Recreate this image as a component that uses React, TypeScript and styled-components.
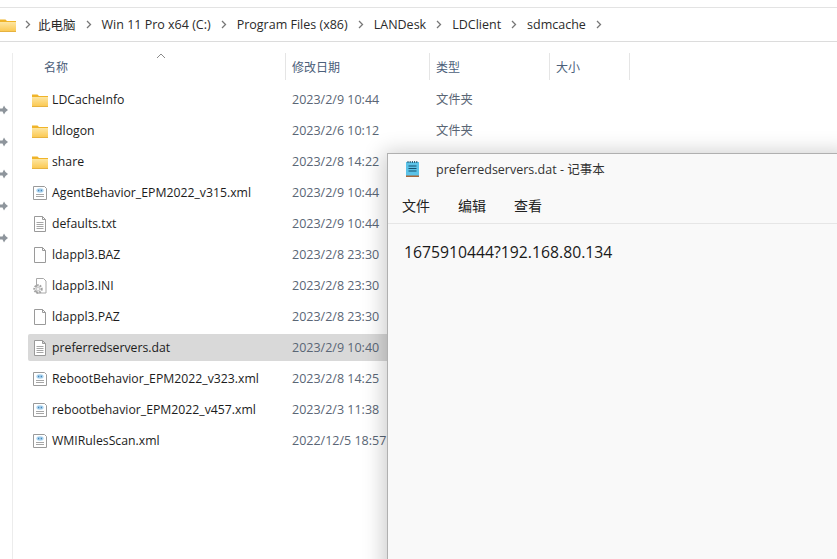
import { FC } from "react";
import styled, { createGlobalStyle } from "styled-components";

const GlobalStyle = createGlobalStyle`
  html, body {
    margin: 0;
    padding: 0;
    background: #fff;
    overflow: hidden;
  }
  * {
    box-sizing: border-box;
  }
`;

const FONT = `"Open Sans", "Noto Sans CJK SC", sans-serif`;

const Page = styled.div`
  position: relative;
  width: 837px;
  height: 559px;
  overflow: hidden;
  background: #fff;
  font-family: ${FONT};
  font-size: 12.25px;
  color: #1c1c1c;
`;

const AddressBar = styled.div`
  display: flex;
  align-items: center;
  height: 35px;
  margin-top: 7px;
  border-top: 1px solid #e3e3e3;
  border-bottom: 1px solid #dcdcdc;
  font-size: 12.5px;
`;

const CrumbItem = styled.span`
  display: flex;
  align-items: center;
`;

const Crumb = styled.span`
  color: #2b2b2b;
  white-space: nowrap;
`;

const Chevron = styled.svg`
  margin: 0 10px;
  flex: none;
`;

const RootChevron = styled(Chevron)`
  margin: 0 7px 0 9px;
`;

const Body = styled.div`
  display: flex;
  padding-top: 11px;
`;

const NavPane = styled.div`
  display: flex;
  flex-direction: column;
  gap: 22px;
  width: 13px;
  height: 506px;
  padding-top: 52px;
  border-right: 1px solid #ececec;
  flex: none;
`;

const Content = styled.div`
  flex: 1;
  padding-left: 15px;
`;

const HeaderRow = styled.div`
  position: relative;
  display: flex;
  height: 27px;
  margin-bottom: 6px;
`;

const HeaderCell = styled.div<{ $width: number }>`
  display: flex;
  align-items: center;
  width: ${(p) => p.$width}px;
  padding-left: 6px;
  border-right: 1px solid #e5e5e5;
  color: #4c607a;
  font-size: 12px;
  flex: none;
`;

const NameHeader = styled(HeaderCell)`
  padding-left: 16px;
  justify-content: flex-start;
`;

const SortCaret = styled.svg`
  position: absolute;
  left: 128px;
  top: 0;
`;

const Rows = styled.div`
  display: flex;
  flex-direction: column;
  gap: 4px;
`;

const Row = styled.div<{ $selected?: boolean }>`
  display: flex;
  align-items: center;
  height: 27px;
  border-radius: 2px;
  background: ${(p) => (p.$selected ? "#d9d9d9" : "transparent")};
`;

const NameCell = styled.div`
  display: flex;
  align-items: center;
  gap: 4px;
  width: 258px;
  padding-left: 4px;
  white-space: nowrap;
  flex: none;
`;

const IconSlot = styled.span`
  display: flex;
  width: 16px;
  height: 16px;
  flex: none;
`;

const DateCell = styled.div`
  width: 144px;
  padding-left: 6px;
  color: #5a6675;
  font-size: 12.5px;
  white-space: nowrap;
  flex: none;
`;

const TypeCell = styled.div`
  padding: 0 0 2px 6px;
  color: #5a6675;
  white-space: nowrap;
`;

const Notepad = styled.div`
  position: absolute;
  left: 387px;
  top: 153px;
  width: 460px;
  height: 420px;
  background: #f9f9f9;
  border: 1px solid #b0b0b0;
  box-shadow: 0 3px 20px 4px rgba(0, 0, 0, 0.2);
`;

const TitleBar = styled.div`
  display: flex;
  align-items: center;
  height: 29px;
  padding-left: 17px;
  gap: 15px;
  color: #333;
  font-size: 12.5px;
`;

const MenuBar = styled.div`
  display: flex;
  align-items: center;
  gap: 28px;
  height: 41px;
  padding: 3px 0 0 14px;
  border-bottom: 1px solid #e6e6e6;
  font-size: 14px;
  color: #222;
`;

const EditorText = styled.div`
  padding: 17px 0 0 16px;
  font-size: 15.75px;
  color: #1a1a1a;
`;

const FolderIcon: FC = () => (
  <svg width="16" height="16" viewBox="0 0 16 16">
    <defs>
      <linearGradient id="folderBody" x1="0" y1="0" x2="0" y2="1">
        <stop offset="0" stopColor="#fde6a2" />
        <stop offset="1" stopColor="#fbc850" />
      </linearGradient>
    </defs>
    <path d="M0 2.5h5.5l1.5 1.5H16v3H0z" fill="#f0b429" />
    <path d="M0 5h16v9.5H0z" fill="url(#folderBody)" />
    <path d="M0 14h16v.8H0z" fill="#e0a526" />
  </svg>
);

const PageOutline: FC = () => (
  <path
    d="M2.5.5h8l3 3v12h-11zM10.5.5v3h3"
    fill="#fff"
    stroke="#9a9a9a"
    strokeWidth="1"
  />
);

const BlankIcon: FC = () => (
  <svg width="16" height="16" viewBox="0 0 16 16">
    <PageOutline />
  </svg>
);

const TextIcon: FC = () => (
  <svg width="16" height="16" viewBox="0 0 16 16">
    <PageOutline />
    <path
      d="M4.5 6.5h7M4.5 8.5h7M4.5 10.5h7M4.5 12.5h7"
      stroke="#a6a6a6"
      strokeWidth="1"
      fill="none"
    />
  </svg>
);

const XmlIcon: FC = () => (
  <svg width="16" height="16" viewBox="0 0 16 16">
    <path d="M1.5 1.5h11l2 2v11h-13z" fill="#fff" stroke="#9a9a9a" />
    <ellipse cx="8" cy="5.5" rx="3.6" ry="2.2" fill="#a9d3ef" />
    <path d="M6.2 5.5h1M8.8 5.5h1" stroke="#2f6fa8" strokeWidth="1.4" />
    <path d="M4 9.5h8M4 11.5h8" stroke="#a6a6a6" />
  </svg>
);

const IniIcon: FC = () => (
  <svg width="16" height="16" viewBox="0 0 16 16">
    <path d="M4.5.5h7l2.5 2.5v12H4.5z" fill="#fff" stroke="#a8a8a8" />
    <circle cx="6" cy="11" r="3.6" fill="none" stroke="#a2a2a2" strokeWidth="2.2" strokeDasharray="1.6 1" />
    <circle cx="6" cy="11" r="2.4" fill="#cfcfcf" />
    <circle cx="6" cy="11" r="1" fill="#fff" />
  </svg>
);

const NotepadIcon: FC = () => (
  <svg width="16" height="18" viewBox="0 0 16 18">
    <rect x="1" y="2" width="13" height="14" fill="#5cc3e8" />
    <rect x="1" y="15.5" width="13" height="1.5" fill="#a8673a" />
    <path d="M3 1v2M5.2 1v2M7.4 1v2M9.6 1v2M11.8 1v2" stroke="#24566e" strokeWidth="1" />
    <path d="M3.5 6h8M3.5 8.5h8M3.5 11h8" stroke="#14506e" strokeWidth="1" />
  </svg>
);

const Pin: FC = () => (
  <svg width="8" height="10" viewBox="0 0 8 10">
    <path d="M0 3.5h2.5L4 .5l1.5 2.5L8 5 5.5 7 4 9.5 2.5 6.5H0z" fill="#8e959c" />
  </svg>
);

const ChevronGlyph: FC = () => (
  <path d="M1 1l3.5 3.5L1 8" stroke="#777" strokeWidth="1.3" fill="none" />
);

const crumbs = [
  "此电脑",
  "Win 11 Pro x64 (C:)",
  "Program Files (x86)",
  "LANDesk",
  "LDClient",
  "sdmcache",
];

type FileKind = "folder" | "text" | "blank" | "xml" | "ini";

const files: { name: string; date: string; type?: string; kind: FileKind; selected?: boolean }[] = [
  { name: "LDCacheInfo", date: "2023/2/9 10:44", type: "文件夹", kind: "folder" },
  { name: "ldlogon", date: "2023/2/6 10:12", type: "文件夹", kind: "folder" },
  { name: "share", date: "2023/2/8 14:22", kind: "folder" },
  { name: "AgentBehavior_EPM2022_v315.xml", date: "2023/2/9 10:44", kind: "xml" },
  { name: "defaults.txt", date: "2023/2/9 10:44", kind: "text" },
  { name: "ldappl3.BAZ", date: "2023/2/8 23:30", kind: "blank" },
  { name: "ldappl3.INI", date: "2023/2/8 23:30", kind: "ini" },
  { name: "ldappl3.PAZ", date: "2023/2/8 23:30", kind: "blank" },
  { name: "preferredservers.dat", date: "2023/2/9 10:40", kind: "text", selected: true },
  { name: "RebootBehavior_EPM2022_v323.xml", date: "2023/2/8 14:25", kind: "xml" },
  { name: "rebootbehavior_EPM2022_v457.xml", date: "2023/2/3 11:38", kind: "xml" },
  { name: "WMIRulesScan.xml", date: "2022/12/5 18:57", kind: "xml" },
];

const icons: Record<FileKind, FC> = {
  folder: FolderIcon,
  text: TextIcon,
  blank: BlankIcon,
  xml: XmlIcon,
  ini: IniIcon,
};

const App: FC = () => {
  return (
    <Page>
      <GlobalStyle />
      <AddressBar>
        <IconSlot>
          <FolderIcon />
        </IconSlot>
        <RootChevron width="6" height="9" viewBox="0 0 6 9">
          <ChevronGlyph />
        </RootChevron>
        {crumbs.map((crumb) => (
          <CrumbItem key={crumb}>
            <Crumb>{crumb}</Crumb>
            <Chevron width="6" height="9" viewBox="0 0 6 9">
              <ChevronGlyph />
            </Chevron>
          </CrumbItem>
        ))}
      </AddressBar>
      <Body>
        <NavPane>
          {[0, 1, 2, 3, 4].map((n) => (
            <Pin key={n} />
          ))}
        </NavPane>
        <Content>
          <HeaderRow>
            <SortCaret width="10" height="6" viewBox="0 0 10 6">
              <path d="M1 5l4-4 4 4" stroke="#8a8a8a" fill="none" />
            </SortCaret>
            <NameHeader $width={258}>名称</NameHeader>
            <HeaderCell $width={144}>修改日期</HeaderCell>
            <HeaderCell $width={120}>类型</HeaderCell>
            <HeaderCell $width={80}>大小</HeaderCell>
          </HeaderRow>
          <Rows>
            {files.map((file) => {
              const Icon = icons[file.kind];
              return (
                <Row key={file.name} $selected={file.selected}>
                  <NameCell>
                    <IconSlot>
                      <Icon />
                    </IconSlot>
                    {file.name}
                  </NameCell>
                  <DateCell>{file.date}</DateCell>
                  <TypeCell>{file.type}</TypeCell>
                </Row>
              );
            })}
          </Rows>
        </Content>
      </Body>
      <Notepad>
        <TitleBar>
          <NotepadIcon />
          preferredservers.dat - 记事本
        </TitleBar>
        <MenuBar>
          <span>文件</span>
          <span>编辑</span>
          <span>查看</span>
        </MenuBar>
        <EditorText>1675910444?192.168.80.134</EditorText>
      </Notepad>
    </Page>
  );
};

export default App;
